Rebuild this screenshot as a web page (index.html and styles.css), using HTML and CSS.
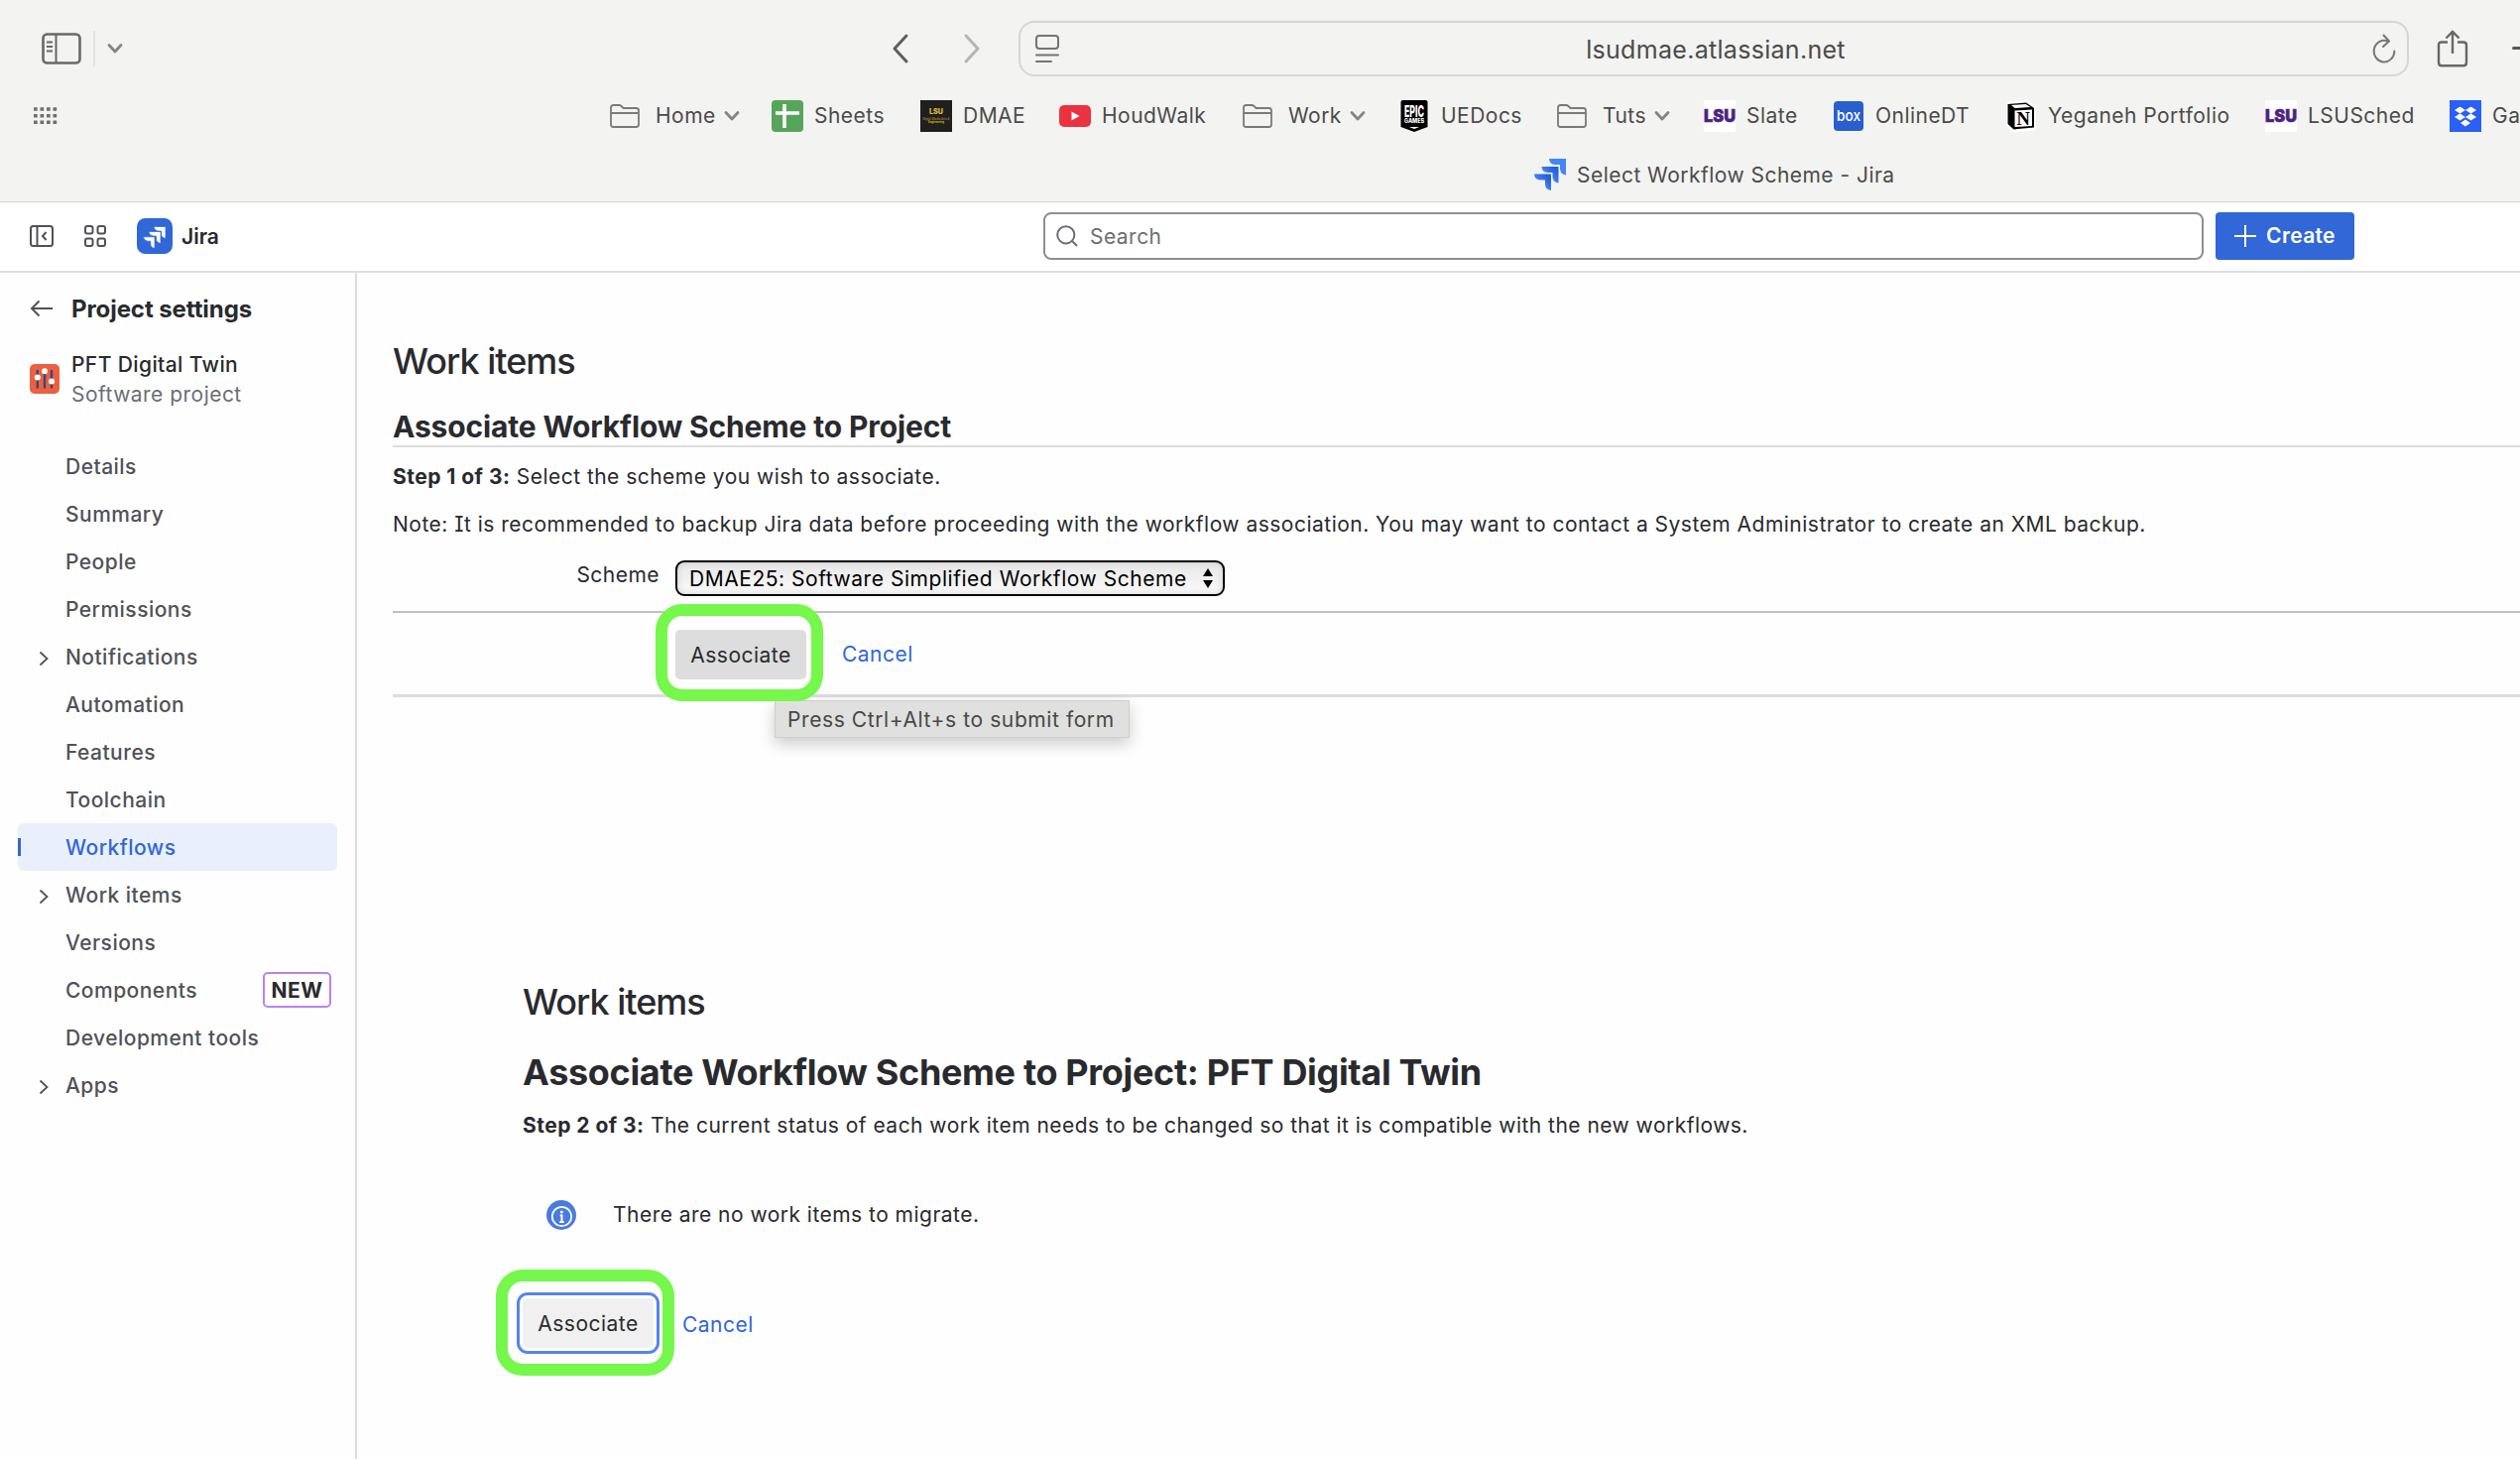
FILE: index.html
```html
<!DOCTYPE html>
<html lang="en">
<head>
<meta charset="utf-8">
<title>Select Workflow Scheme - Jira</title>
<link rel="stylesheet" href="styles.css">
</head>
<body>
<svg class="defs" width="0" height="0" aria-hidden="true">
  <symbol id="folder" viewBox="0 0 30 24"><path d="M1 5V20.500Q1 23 3.500 23H26.500Q29 23 29 20.500V6.500Q29 4 26.500 4H13.500L11.500 2Q10.500 1 9 1H3.500Q1 1 1 3.500V5M1 9H29" fill="none" stroke="#7a7a78" stroke-width="1.800"/></symbol>
  <symbol id="down" viewBox="0 0 16 12"><path d="M2 2.500L8 9L14 2.500" fill="none" stroke="#858583" stroke-width="2.800" stroke-linecap="round" stroke-linejoin="round"/></symbol>
  <symbol id="right" viewBox="0 0 12 16"><path d="M1.500 1.500L8.500 8L1.500 14.500" fill="none" stroke="#505258" stroke-width="1.800"/></symbol>
</svg>

<header class="chrome">
  <div class="toolbar">
    <svg width="40" height="32" viewBox="0 0 40 32"><rect x="1.500" y="1.500" width="37" height="29" rx="4" fill="none" stroke="#686865" stroke-width="2.600"/><path d="M14.500 1V31M5 9.500H11M5 14H11M5 18.500H11" stroke="#686865" stroke-width="2"/></svg>
    <span class="divider"></span>
    <svg class="ico-menu" width="16" height="12"><use href="#down"/></svg>
    <svg class="ico-back" width="18" height="32" viewBox="0 0 18 32"><path d="M15 3L3 16L15 29" fill="none" stroke="#5e5e5c" stroke-width="3" stroke-linecap="round" stroke-linejoin="round"/></svg>
    <svg class="ico-fwd" width="18" height="32" viewBox="0 0 18 32"><path d="M3 3L15 16L3 29" fill="none" stroke="#b5b5b3" stroke-width="3" stroke-linecap="round" stroke-linejoin="round"/></svg>
    <div class="address">
      <svg width="24" height="30" viewBox="0 0 24 30"><rect x="1" y="2" width="22" height="13" rx="3" fill="none" stroke="#747472" stroke-width="2"/><path d="M1 21.500H23M1 28H16" stroke="#747472" stroke-width="2" stroke-linecap="round"/></svg>
      <span class="url">lsudmae.atlassian.net</span>
      <svg width="24" height="30" viewBox="0 0 24 30"><path d="M15.500 7.500A10.300 10.800 0 1 0 22.300 17.500M11.500 1.500L17 7.500L11 13" fill="none" stroke="#777775" stroke-width="2" stroke-linecap="round" stroke-linejoin="round"/></svg>
    </div>
    <svg class="ico-share" width="32" height="38" viewBox="0 0 32 38"><path d="M11 12.500H5Q2 12.500 2 15.500V33Q2 36.300 5 36.300H27Q30 36.300 30 33V15.500Q30 12.500 27 12.500H21M16 24V2M9.500 8.500L16 1.800L22.500 8.500" fill="none" stroke="#686866" stroke-width="2.400" stroke-linejoin="round"/></svg>
    <svg class="ico-plus" width="30" height="30" viewBox="0 0 30 30"><path d="M2.500 14.500H29M15 1V29" stroke="#555553" stroke-width="3" stroke-linecap="round"/></svg>
  </div>
  <nav class="bookmarks">
    <svg width="26" height="18" viewBox="0 0 26 18"><path d="M0 2H23.300M0 8.700H23.300M0 15.300H23.300" stroke="#6f6f6d" stroke-width="3.600" stroke-dasharray="3.700 2.800"/></svg>
    <a class="bm folder"><svg width="30" height="24"><use href="#folder"/></svg><span>Home</span><svg width="16" height="12"><use href="#down"/></svg></a>
    <a class="bm"><svg width="32" height="32" viewBox="0 0 32 32"><rect width="32" height="32" rx="4" fill="#57a55a"/><path d="M13 4V28M4 13H28" stroke="#fff" stroke-width="3.600"/></svg><span>Sheets</span></a>
    <a class="bm"><svg width="32" height="32" viewBox="0 0 32 32"><rect width="32" height="32" fill="#201f1d"/><g font-family="Inter, sans-serif" font-weight="700" text-anchor="middle" letter-spacing="0" fill="#d5b236"><text x="16" y="14" font-size="7" font-weight="900" textLength="14" lengthAdjust="spacingAndGlyphs">LSU</text><text x="16" y="19.500" font-size="3.200" textLength="27" lengthAdjust="spacingAndGlyphs" fill="#8f7a30">Digital Media Arts &amp;</text><text x="16" y="23" font-size="3.200" textLength="16" lengthAdjust="spacingAndGlyphs">Engineering</text></g></svg><span>DMAE</span></a>
    <a class="bm"><svg width="32" height="22" viewBox="0 0 32 22"><rect width="32" height="22" rx="5" fill="#eb323f"/><path d="M12.500 6.500L20.500 11L12.500 15.500Z" fill="#fff"/></svg><span>HoudWalk</span></a>
    <a class="bm folder"><svg width="30" height="24"><use href="#folder"/></svg><span>Work</span><svg width="16" height="12"><use href="#down"/></svg></a>
    <a class="bm"><svg width="32" height="32" viewBox="0 0 32 32"><path d="M2.500 2Q2.500 0 4.500 0H27.500Q29.500 0 29.500 2V27L16 32L2.500 27Z" fill="#000"/><g font-family="Inter, sans-serif" font-weight="800" text-anchor="middle" letter-spacing="0" fill="#fff"><text x="16" y="16.500" font-size="16" textLength="20" lengthAdjust="spacingAndGlyphs">EPIC</text><text x="16" y="23" font-size="5.500" textLength="20" lengthAdjust="spacingAndGlyphs">GAMES</text></g><path d="M11 27H21L16 29Z" fill="#fff"/></svg><span>UEDocs</span></a>
    <a class="bm folder"><svg width="30" height="24"><use href="#folder"/></svg><span>Tuts</span><svg width="16" height="12"><use href="#down"/></svg></a>
    <a class="bm"><svg width="32" height="32" viewBox="0 0 32 32"><rect width="32" height="32" fill="#fff"/><text class="lsu" x="0" y="21.500" textLength="32" lengthAdjust="spacingAndGlyphs">LSU</text></svg><span>Slate</span></a>
    <a class="bm"><svg width="32" height="32" viewBox="0 0 32 32"><rect x="1" y="1" width="30" height="30" rx="4" fill="#285fcd"/><text x="16" y="20.500" text-anchor="middle" letter-spacing="0" font-family="Inter, sans-serif" font-weight="500" font-size="15" textLength="24" lengthAdjust="spacingAndGlyphs" fill="#fff">box</text></svg><span>OnlineDT</span></a>
    <a class="bm"><svg width="32" height="32" viewBox="0 0 32 32"><path d="M1 4L4 1L22 0L31 6V28L28 31L8 32L1 26Z" fill="#fff"/><path d="M2.500 4L21 2.500L29 8V27.500L8.500 29.500L2.500 24Z" fill="#000"/><path d="M6 5L20.500 4L25.500 7L9.500 8ZM9.500 10.500L27 9.500V26L9.500 27Z" fill="#fff"/><text x="18.200" y="24.500" text-anchor="middle" letter-spacing="0" font-family="Liberation Serif, serif" font-weight="700" font-size="18.500">N</text></svg><span>Yeganeh Portfolio</span></a>
    <a class="bm"><svg width="32" height="32" viewBox="0 0 32 32"><rect width="32" height="32" fill="#fff"/><text class="lsu" x="0" y="21.500" textLength="32" lengthAdjust="spacingAndGlyphs">LSU</text></svg><span>LSUSched</span></a>
    <a class="bm"><svg width="32" height="32" viewBox="0 0 32 32"><rect width="32" height="32" fill="#2a60f5"/><path d="M10.500 6.500L16 10L10.500 13.500L5 10ZM21.500 6.500L27 10L21.500 13.500L16 10ZM10.500 13.500L16 17L10.500 20.500L5 17ZM21.500 13.500L27 17L21.500 20.500L16 17ZM16 19.500L21 23L16 26.500L11 23Z" fill="#fff"/></svg><span>Ga</span></a>
  </nav>
  <div class="tab">
    <svg width="32" height="32" viewBox="0 0 32 32"><defs><linearGradient id="jg" x1="1" y1="0" x2="0" y2="1"><stop offset=".2" stop-color="#2761d8"/><stop offset=".6" stop-color="#4585f7"/></linearGradient></defs><path d="M15 0H32V16.500Q26 15.500 26 10V6H21Q15 5.500 15 0Z" fill="#4585f7"/><path d="M7.500 8H24.500V24.500Q18.500 23.500 18.500 18V14H13.500Q7.500 13.500 7.500 8Z" fill="url(#jg)"/><path d="M0 15.500H17V32Q11 31 11 25.500V21.500H6Q0 21 0 15.500Z" fill="url(#jg)"/></svg>
    <span>Select Workflow Scheme - Jira</span>
  </div>
</header>

<div class="topbar">
  <svg width="24" height="22" viewBox="0 0 24 22"><rect x="1" y="1" width="22" height="20" rx="2.500" fill="none" stroke="#505258" stroke-width="2"/><path d="M7.500 1V21M16.500 7L13 11L16.500 15" fill="none" stroke="#505258" stroke-width="2"/></svg>
  <svg class="ico-apps" width="23" height="22" viewBox="0 0 23 22"><g fill="none" stroke="#505258" stroke-width="2"><rect x="1" y="1" width="7.500" height="7.500" rx="2"/><rect x="13.500" y="1" width="7.500" height="7.500" rx="2"/><rect x="1" y="13.500" width="7.500" height="7.500" rx="2"/><rect x="13.500" y="13.500" width="7.500" height="7.500" rx="2"/></g></svg>
  <svg class="logo" width="36" height="36" viewBox="0 0 36 36"><rect width="36" height="36" rx="8.500" fill="#3167d7"/><path d="M17 8.500H29V20.500Q24.500 19.500 24.500 16V13H21.500Q17.500 12.500 17 8.500ZM12 13.500H24V25.500Q19.500 24.500 19.500 21V18H16.500Q12.500 17.500 12 13.500ZM6.500 18.800H18V30.500Q13.800 29.500 13.800 26V23.200H11Q7 22.800 6.500 18.800Z" fill="#fff" stroke="#3167d7" stroke-width=".7"/></svg>
  <span class="brand">Jira</span>
  <div class="search"><svg width="22" height="22" viewBox="0 0 22 22"><circle cx="9.800" cy="9.800" r="8.600" fill="none" stroke="#6b6e76" stroke-width="2"/><path d="M15.800 15.800L21 21" stroke="#6b6e76" stroke-width="2"/></svg><span>Search</span></div>
  <button class="create"><svg width="22" height="22" viewBox="0 0 22 22"><path d="M11 0V22M0 11H22" stroke="#fff" stroke-width="2"/></svg><span>Create</span></button>
</div>

<div class="body">
  <aside class="sidebar">
    <div class="back"><svg width="24" height="18" viewBox="0 0 24 18"><path d="M23 9H2M9.500 1.500L2 9L9.500 16.500" fill="none" stroke="#505258" stroke-width="2"/></svg><span>Project settings</span></div>
    <div class="project">
      <svg width="30" height="30" viewBox="0 0 30 30"><rect width="30" height="30" rx="5" fill="#ec6041"/><path d="M7.800 7V23.500M15 7V23.500M22 7V23.500" stroke="#2f4a7c" stroke-width="2.400" stroke-linecap="round"/><circle cx="7.800" cy="13.500" r="3" fill="#fff"/><circle cx="15" cy="7.300" r="3" fill="#fff"/><circle cx="22" cy="17.600" r="3" fill="#fff"/></svg>
      <div class="names"><span class="pname">PFT Digital Twin</span><span class="ptype">Software project</span></div>
    </div>
    <ul class="nav">
      <li><span>Details</span></li>
      <li><span>Summary</span></li>
      <li><span>People</span></li>
      <li><span>Permissions</span></li>
      <li><svg width="12" height="16"><use href="#right"/></svg><span>Notifications</span></li>
      <li><span>Automation</span></li>
      <li><span>Features</span></li>
      <li><span>Toolchain</span></li>
      <li class="active"><span>Workflows</span></li>
      <li><svg width="12" height="16"><use href="#right"/></svg><span>Work items</span></li>
      <li><span>Versions</span></li>
      <li><span>Components</span><b class="badge">NEW</b></li>
      <li><span>Development tools</span></li>
      <li><svg width="12" height="16"><use href="#right"/></svg><span>Apps</span></li>
    </ul>
  </aside>

  <main class="main">
    <h1>Work items</h1>
    <h2 class="ruled">Associate Workflow Scheme to Project</h2>
    <p class="step1"><b>Step 1 of 3:</b> Select the scheme you wish to associate.</p>
    <p class="note">Note: <span class="serif-i">I</span>t is recommended to backup Jira data before proceeding with the workflow association. You may want to contact a System Administrator to create an XML backup.</p>
    <div class="field">
      <label>Scheme</label>
      <div class="select"><span>DMAE25: Software Simplified Workflow Scheme</span><svg width="12" height="22" viewBox="0 0 12 22"><path d="M6 1L11 9H1ZM6 21L11 13H1Z" fill="#000"/></svg></div>
    </div>
    <div class="actions">
      <div class="target target-a"><button class="btn">Associate</button></div>
      <a class="cancel cancel-a">Cancel</a>
      <div class="tooltip">Press Ctrl+Alt+s to submit form</div>
    </div>

    <section class="second">
      <h1>Work items</h1>
      <h2 class="large">Associate Workflow Scheme to Project: PFT Digital Twin</h2>
      <p class="step2"><b>Step 2 of 3:</b> The current status of each work item needs to be changed so that it is compatible with the new workflows.</p>
      <div class="info"><svg width="30" height="30" viewBox="0 0 30 30"><circle cx="15" cy="15" r="15" fill="#4a7be0"/><circle cx="15.500" cy="16.500" r="9.700" fill="none" stroke="#fff" stroke-width="1.800"/><path d="M13.700 15.500H15.500V22M13.300 22H17.700" stroke="#fff" stroke-width="2" fill="none"/><circle cx="15.300" cy="12" r="1.500" fill="#fff"/></svg><span>There are no work items to migrate.</span></div>
      <div class="actions2">
        <div class="target target-b"><button class="btn focused">Associate</button></div>
        <a class="cancel">Cancel</a>
      </div>
    </section>
  </main>
</div>
</body>
</html>
```
FILE: styles.css
```css
* { box-sizing: border-box; }
body { margin: 0; width: 2541px; height: 1471px; overflow: hidden; background: #fefefe; color: #292a2e; font: 21px/30px Inter, "Liberation Sans", sans-serif; letter-spacing: .47px; }
svg { flex: none; display: block; }
.defs { position: absolute; }
span, b, a, p { white-space: nowrap; }
h1, h2, p, ul { margin: 0; padding: 0; }
button { border: 0; padding: 0; font: inherit; color: inherit; letter-spacing: inherit; }

/* Browser window chrome */
.chrome { height: 204px; background: #f3f3f1; border-bottom: 1px solid #d4d4d4; color: #4b4b49; overflow: hidden; }
.toolbar { display: flex; align-items: center; height: 97px; padding-left: 42px; }
.divider { flex: none; width: 2px; height: 36px; margin-left: 12px; background: #e2e2e0; }
.ico-menu { margin-left: 12px; }
.ico-back { margin-left: 775px; }
.ico-fwd { margin-left: 54px; }
.address { display: flex; flex: none; align-items: center; justify-content: space-between; width: 1402px; height: 56px; margin: 1px 0 0 38px; padding: 0 11px 0 15px; border: 2px solid #d6d6d4; border-radius: 16px; }
.url { padding-top: 2px; font-size: 25px; letter-spacing: .3px; }
.ico-share { margin-left: 28px; }
.ico-plus { margin-left: 43px; }
.bookmarks { display: grid; grid-template-columns: 581px 163px 150px 140px 185px 157px 160px 148px 130px 174px 262px 186px 80px; align-items: center; height: 40px; padding-left: 34px; }
.bm { display: flex; align-items: center; gap: 11px; }
.lsu { font: 900 17.500px Inter, sans-serif; letter-spacing: 0; fill: #4b2382; stroke: #4b2382; stroke-width: .5px; }
.folder { gap: 8px; }
.folder span { margin-left: 8px; }
.tab { display: flex; align-items: center; gap: 11px; height: 32px; margin-top: 23px; padding-left: 1547px; }
.tab span, .brand, .search span, .back span, .nav span { padding-top: 2px; }

/* Jira top navigation */
.topbar { display: flex; align-items: center; height: 71px; padding: 0 0 2px 30px; border-bottom: 2px solid #dddee1; background: #fff; }
.ico-apps { margin-left: 31px; }
.logo { margin-left: 30px; }
.brand { width: 38px; margin-left: 9px; font-weight: 600; letter-spacing: 0; }
.search { display: flex; align-items: center; gap: 12px; width: 1170px; height: 48px; margin-left: 831px; padding-left: 11px; border: 2px solid #8c8f97; border-radius: 8px; color: #6b6e76; }
.create { display: flex; align-items: center; justify-content: center; gap: 10px; width: 140px; height: 48px; margin-left: 12px; border-radius: 4px; background: #3167d7; color: #fff; font-weight: 600; letter-spacing: .35px; }

/* Project settings sidebar */
.body { display: flex; height: 1196px; }
.sidebar { width: 360px; border-right: 2px solid #dddee1; }
.back { display: flex; align-items: center; gap: 18px; height: 30px; margin: 21px 0 0 30px; font-size: 24px; font-weight: 700; letter-spacing: -.08px; }
.project { display: flex; align-items: center; gap: 12px; height: 60px; margin: 26px 0 0 30px; }
.names { display: flex; flex-direction: column; padding-top: 2px; }
.pname { font-weight: 500; letter-spacing: .4px; }
.ptype { color: #6b6e76; }
.nav { list-style: none; margin: 34px 18px 0 18px; font-weight: 500; color: #505258; letter-spacing: .47px; }
.nav li { display: flex; align-items: center; height: 48px; padding: 0 6px 0 48px; }
.nav li svg { margin: 3px 15px 0 -27px; }
.nav .active { border-radius: 6px; background: linear-gradient(#3167d7, #3167d7) 0 50% / 3px 18px no-repeat #e9f0fc; color: #3167d7; }
.badge { width: 69px; height: 36px; margin-left: auto; border: 2px solid #bf80ec; border-radius: 5px; line-height: 33px; text-align: center; color: #292a2e; letter-spacing: .4px; }

/* Main content */
.main { flex: 1; min-width: 0; padding-left: 36px; }
h1 { margin-top: 67px; font-size: 36px; line-height: 44px; font-weight: 500; letter-spacing: -1px; }
h2 { font-weight: 700; }
.ruled { margin-top: 25px; border-bottom: 2px solid #dddddd; font-size: 30px; line-height: 38px; letter-spacing: -.14px; }
.step1 { margin-top: 15px; }
.note { margin-top: 18px; letter-spacing: .49px; }
.serif-i { font-feature-settings: "cv08"; }
.field { display: flex; align-items: flex-start; gap: 16px; height: 36px; margin-top: 21px; }
.field label { width: 269px; text-align: right; }
.select { display: flex; align-items: center; justify-content: space-between; width: 554px; height: 36px; padding: 0 9px 0 12px; border: 2px solid #000; border-radius: 9px; background: linear-gradient(#e6e6e6, #fbfbfb); box-shadow: inset 0 0 6px #ccc; color: #000; letter-spacing: .54px; }
.select span { padding-top: 2px; }
.actions { position: relative; z-index: 0; display: flex; height: 87px; margin-top: 15px; padding: 17px 0 0 285px; border-top: 2px solid #c0c0c0; border-bottom: 3px solid #dddddd; }
.btn { display: block; width: 132px; height: 50px; padding-top: 2px; border-radius: 5px; background: #dddddd; }
.target { position: relative; width: 132px; height: 50px; }
.target::after { content: ""; position: absolute; border: 12px solid #75f74c; border-radius: 27px; }
.target-a::after { inset: -26px -17px -22px -20px; }
.target-b::after { inset: -29px -21px -28px -27px; }
.cancel { margin: 12px 0 0 29px; color: #3167d7; }
.cancel-a { margin: 10px 0 0 36px; }
.tooltip { position: absolute; z-index: -1; left: 385px; top: 88px; width: 358px; height: 38px; padding: 4px 0 0 12px; border: 1px solid #cfcfcd; background: #e0e0de; box-shadow: 0 6px 16px rgba(0,0,0,.2); color: #484846; letter-spacing: .59px; }

.second { margin-left: 131px; }
.second h1 { margin-top: 285px; }
.large { margin-top: 27px; font-size: 36px; line-height: 44px; letter-spacing: -.33px; }
.step2 { margin-top: 17px; }
.info { display: flex; align-items: center; gap: 37px; height: 30px; margin: 60px 0 0 24px; }
.actions2 { display: flex; margin-top: 69px; }
.focused { background: #f0f0f0; box-shadow: 0 0 0 3px #fff, 0 0 0 6px #5486e8; }
```
